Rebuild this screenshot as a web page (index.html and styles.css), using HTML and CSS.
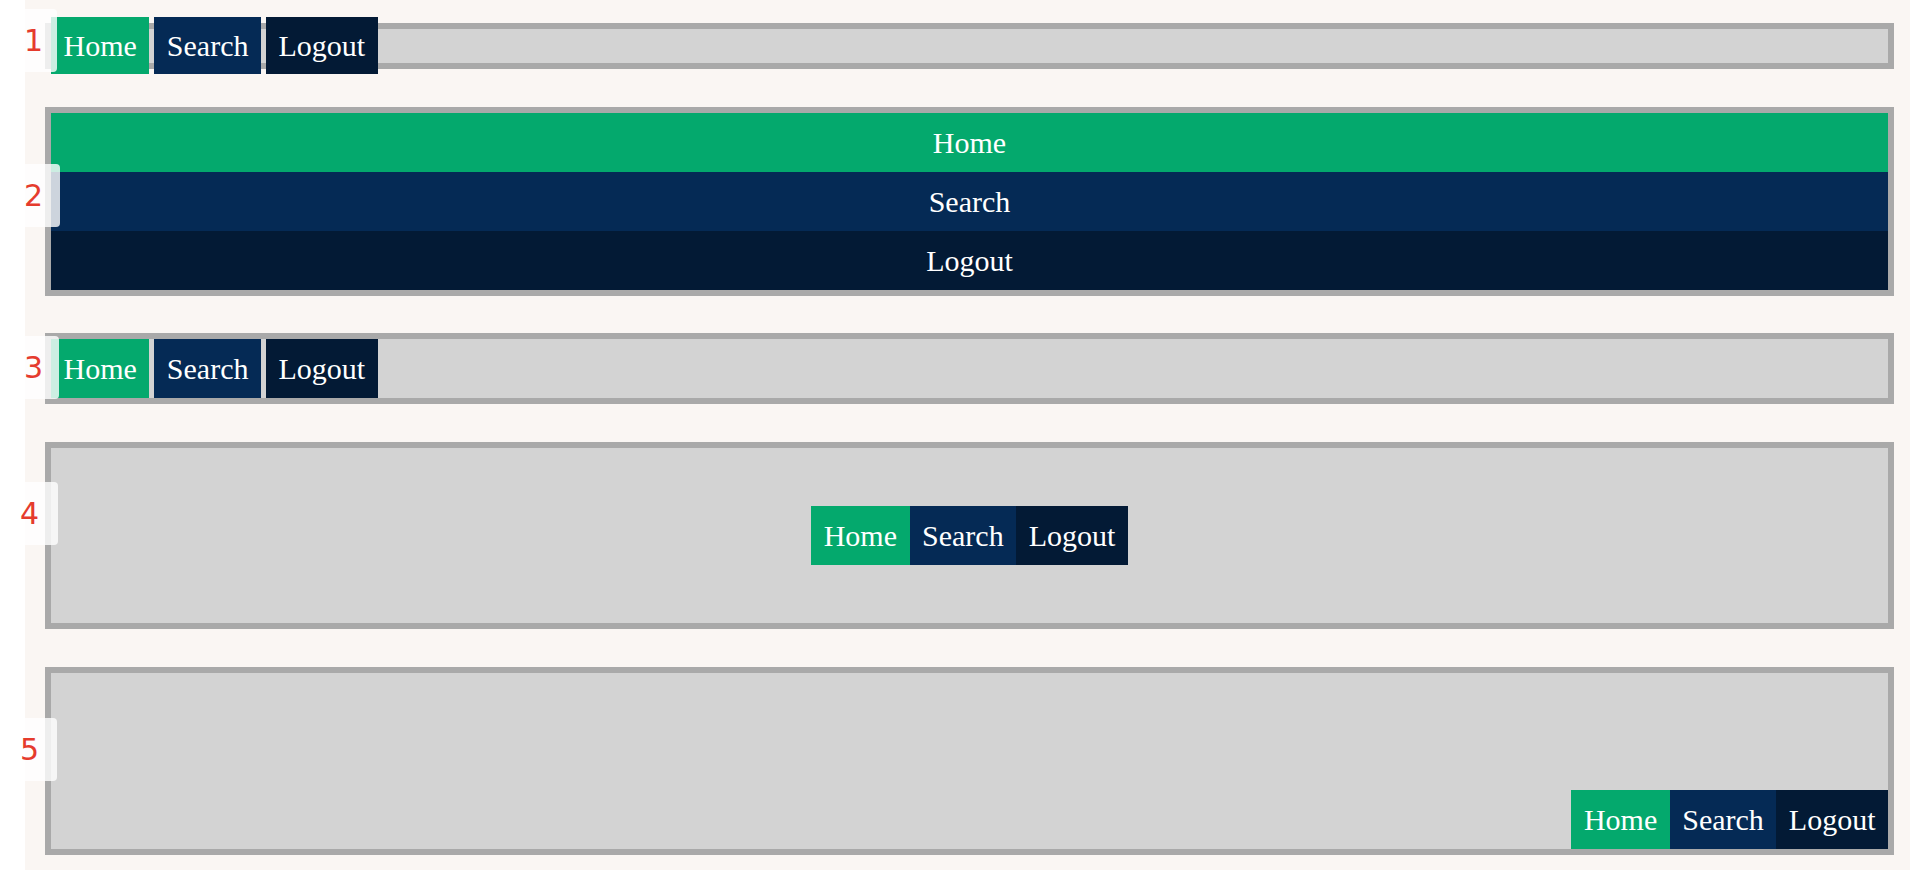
FILE: index.html
```html
<!DOCTYPE html>
<html>
<head>
<meta charset="utf-8">
<link rel="stylesheet" href="styles.css">
</head>
<body>
<main class="page">
  <nav class="bar bar-inline">
    <a class="item home" href="#">Home</a>
    <a class="item search" href="#">Search</a>
    <a class="item logout" href="#">Logout</a>
  </nav>
  <nav class="bar bar-block">
    <a class="item home" href="#">Home</a>
    <a class="item search" href="#">Search</a>
    <a class="item logout" href="#">Logout</a>
  </nav>
  <nav class="bar bar-inline-block">
    <a class="item home" href="#">Home</a>
    <a class="item search" href="#">Search</a>
    <a class="item logout" href="#">Logout</a>
  </nav>
  <nav class="bar bar-center">
    <a class="item home" href="#">Home</a><a class="item search" href="#">Search</a><a class="item logout" href="#">Logout</a>
  </nav>
  <nav class="bar bar-end">
    <a class="item home" href="#">Home</a><a class="item search" href="#">Search</a><a class="item logout" href="#">Logout</a>
  </nav>
</main>
<div class="badge b1">1</div>
<div class="badge b2">2</div>
<div class="badge b3">3</div>
<div class="badge b4">4</div>
<div class="badge b5">5</div>
</body>
</html>
```
FILE: styles.css
```css
html, body {
  margin: 0;
  padding: 0;
  background: #ffffff;
}

body {
  font-family: "Liberation Serif", "Times New Roman", serif;
  font-size: 20px;
  position: relative;
  min-height: 870px;
  overflow: hidden;
}

.page {
  margin-left: 25px;
  background: #faf6f3;
  min-height: 870px;
  box-sizing: border-box;
  padding: 23px 16px 16px 20px;
  display: flex;
  flex-direction: column;
}

.bar {
  background: #d3d3d3;
  border: 6px solid #a9a9a9;
  margin-bottom: 38px;
}

.item {
  font-family: "Liberation Serif", "Times New Roman", serif;
  font-size: 30px;
  color: #ffffff;
  text-decoration: none;
  padding: 12px 12.5px;
  line-height: 35px;
}

.home { background: #04a96d; }
.search { background: #052a55; }
.logout { background: #031a35; }

.bar-inline {
  line-height: 0;
  height: 34px;
}
.bar-inline .item {
  line-height: 34px;
}

.bar-block {
  margin-bottom: 37px;
}
.bar-block .item {
  display: block;
  text-align: center;
}

.bar-inline-block {
  line-height: 0;
}
.bar-inline-block .item {
  display: inline-block;
}

.bar-center {
  height: 175px;
  display: flex;
  justify-content: center;
  align-items: center;
}

.bar-end {
  height: 176px;
  display: flex;
  justify-content: flex-end;
  align-items: flex-end;
  margin-bottom: 0;
}

.badge {
  position: absolute;
  left: 0;
  height: 63px;
  width: 57px;
  box-sizing: border-box;
  padding-left: 24px;
  background: rgba(255, 255, 255, 0.8);
  border-radius: 0 4px 4px 0;
  color: #e53b2d;
  font-family: "DejaVu Sans", "Liberation Sans", sans-serif;
  font-size: 30px;
  line-height: 63px;
}

.b1 { top: 9px; width: 57px; }
.b2 { top: 164px; width: 60px; }
.b3 { top: 336px; width: 59px; }
.b4 { top: 482px; width: 58px; padding-left: 20px; }
.b5 { top: 718px; width: 57px; padding-left: 20px; }
```
